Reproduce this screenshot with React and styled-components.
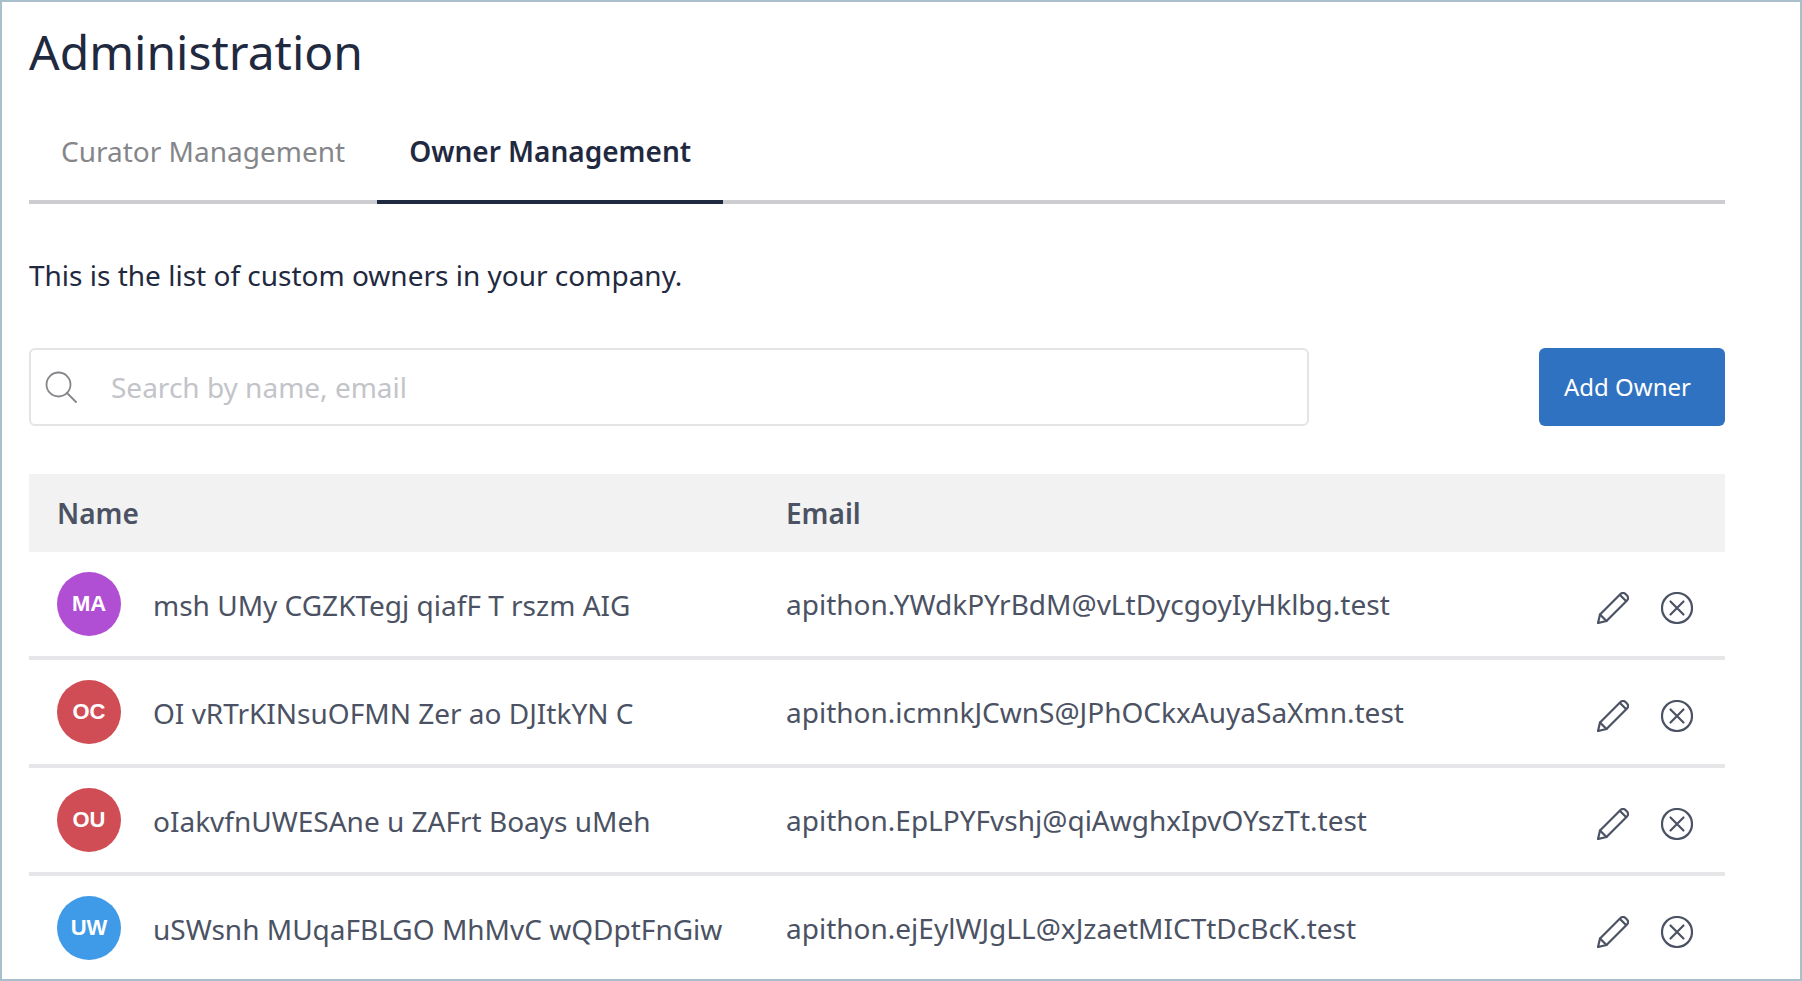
import React from "react";
import styled, { createGlobalStyle } from "styled-components";

const GlobalStyle = createGlobalStyle`
    html, body {
        margin: 0;
        padding: 0;
        height: 100%;
        overflow: hidden;
        background: #fff;
    }
    body {
        font-family: "Noto Sans", "Open Sans", sans-serif;
    }
`;

const Frame = styled.div`
    box-sizing: border-box;
    width: 1802px;
    height: 981px;
    overflow: hidden;
    border: 2px solid #a9c0cc;
    padding: 0 75px 0 27px;
    background: #fff;
`;

const Title = styled.h1`
    margin: 0;
    height: 100px;
    font-size: 48px;
    line-height: 100px;
    font-weight: 400;
    color: #1f2940;
`;

const Tabs = styled.div`
    display: flex;
    height: 102px;
    box-sizing: border-box;
    border-bottom: 4px solid #cdcdd1;
`;

const Tab = styled.div`
    height: 102px;
    box-sizing: border-box;
    padding: 0 32px;
    font-size: 28px;
    line-height: 98px;
    font-weight: ${(props) => (props.$active ? 600 : 400)};
    color: ${(props) => (props.$active ? "#1f2940" : "#85868a")};
    border-bottom: 4px solid ${(props) => (props.$active ? "#1f2940" : "transparent")};
`;

const Intro = styled.p`
    margin: 0;
    height: 144px;
    font-size: 28px;
    line-height: 142px;
    color: #1f2940;
`;

const Toolbar = styled.div`
    display: flex;
    justify-content: space-between;
    height: 78px;
    margin-bottom: 48px;
`;

const SearchBox = styled.div`
    box-sizing: border-box;
    width: 1280px;
    display: flex;
    align-items: center;
    padding-left: 14px;
    gap: 34px;
    border: 2px solid #e4e4e6;
    border-radius: 6px;
    font-size: 28px;
    color: #c2c4c9;
`;

const AddButton = styled.button`
    width: 186px;
    border: 0;
    border-radius: 6px;
    background: #2f72c2;
    color: #fff;
    font-family: inherit;
    font-size: 24px;
    padding: 0 9px 2px 0;
`;

const HeadRow = styled.div`
    display: grid;
    grid-template-columns: 757px 1fr;
    align-items: center;
    height: 78px;
    background: #f2f2f2;
    font-size: 28px;
    font-weight: 600;
    color: #4b5263;
`;

const HeadCell = styled.div`
    padding-left: ${(props) => (props.$first ? "28px" : "0")};
`;

const Row = styled.div`
    box-sizing: border-box;
    display: grid;
    grid-template-columns: 757px 1fr auto;
    align-items: center;
    height: 108px;
    padding-right: 32px;
    border-bottom: 4px solid #e6e6e8;
    font-size: 28px;
    color: #4b5263;
`;

const NameCell = styled.div`
    display: flex;
    align-items: center;
    gap: 32px;
    padding-left: 28px;
`;

const NameText = styled.span`
    padding-top: 2px;
`;

const Avatar = styled.div`
    width: 64px;
    height: 64px;
    flex: none;
    border-radius: 50%;
    background: ${(props) => props.$color};
    color: #fff;
    font-family: "Liberation Sans", Arial, sans-serif;
    font-size: 22px;
    font-weight: 700;
    display: flex;
    align-items: center;
    justify-content: center;
`;

const Actions = styled.div`
    display: flex;
    align-items: center;
    gap: 32px;
    padding-top: 8px;
`;

const Glyph = styled.svg`
    display: block;
    width: 32px;
    height: 32px;
    fill: none;
    stroke: #4b5263;
    stroke-width: 2.2;
    stroke-linejoin: round;
    stroke-linecap: round;
`;

const SearchGlyph = styled(Glyph)`
    stroke: #85868a;
    stroke-width: 1.8;
`;

const owners = [
    { initials: "MA", color: "#b14fd4", name: "msh UMy CGZKTegj qiafF T rszm AIG", email: "apithon.YWdkPYrBdM@vLtDycgoyIyHklbg.test" },
    { initials: "OC", color: "#d14d55", name: "OI vRTrKINsuOFMN Zer ao DJItkYN C", email: "apithon.icmnkJCwnS@JPhOCkxAuyaSaXmn.test" },
    { initials: "OU", color: "#d14d55", name: "oIakvfnUWESAne u ZAFrt Boays uMeh", email: "apithon.EpLPYFvshj@qiAwghxIpvOYszTt.test" },
    { initials: "UW", color: "#3f9ae8", name: "uSWsnh MUqaFBLGO MhMvC wQDptFnGiw", email: "apithon.ejEylWJgLL@xJzaetMICTtDcBcK.test" },
];

const SearchIcon = () => (
    <SearchGlyph viewBox="0 0 32 32">
        <circle cx="13.5" cy="13.5" r="12" />
        <path d="M22 22l9 9" />
    </SearchGlyph>
);

const PencilIcon = () => (
    <Glyph viewBox="0 0 32 32">
        <path d="M1 31l2-8.5L23.5 2a3.5 3.5 0 0 1 5 0l1.5 1.5a3.5 3.5 0 0 1 0 5L9.5 29z" />
        <path d="M3 22.5l6.5 6.5M23 3l6 6" />
    </Glyph>
);

const RemoveIcon = () => (
    <Glyph viewBox="0 0 32 32">
        <circle cx="16" cy="16" r="15" />
        <path d="M9.5 9.5l13 13M22.5 9.5l-13 13" />
    </Glyph>
);

const App = () => (
    <>
        <GlobalStyle />
        <Frame>
            <Title>Administration</Title>
            <Tabs>
                <Tab>Curator Management</Tab>
                <Tab $active>Owner Management</Tab>
            </Tabs>
            <Intro>This is the list of custom owners in your company.</Intro>
            <Toolbar>
                <SearchBox>
                    <SearchIcon />
                    <span>Search by name, email</span>
                </SearchBox>
                <AddButton>Add Owner</AddButton>
            </Toolbar>
            <HeadRow>
                <HeadCell $first>Name</HeadCell>
                <HeadCell>Email</HeadCell>
            </HeadRow>
            {owners.map((owner) => (
                <Row key={owner.initials}>
                    <NameCell>
                        <Avatar $color={owner.color}>{owner.initials}</Avatar>
                        <NameText>{owner.name}</NameText>
                    </NameCell>
                    <div>{owner.email}</div>
                    <Actions>
                        <PencilIcon />
                        <RemoveIcon />
                    </Actions>
                </Row>
            ))}
        </Frame>
    </>
);

export default App;
